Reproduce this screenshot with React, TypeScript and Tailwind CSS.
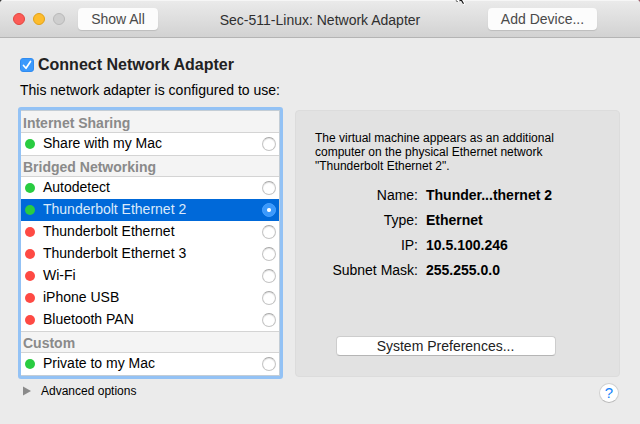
import { useState } from "react";

type Adapter = { name: string; up: boolean };
type Group = { title: string; adapters: Adapter[] };

const groups: Group[] = [
  { title: "Internet Sharing", adapters: [{ name: "Share with my Mac", up: true }] },
  {
    title: "Bridged Networking",
    adapters: [
      { name: "Autodetect", up: true },
      { name: "Thunderbolt Ethernet 2", up: true },
      { name: "Thunderbolt Ethernet", up: false },
      { name: "Thunderbolt Ethernet 3", up: false },
      { name: "Wi-Fi", up: false },
      { name: "iPhone USB", up: false },
      { name: "Bluetooth PAN", up: false },
    ],
  },
  { title: "Custom", adapters: [{ name: "Private to my Mac", up: true }] },
];

const details = [
  ["Name:", "Thunder...thernet 2"],
  ["Type:", "Ethernet"],
  ["IP:", "10.5.100.246"],
  ["Subnet Mask:", "255.255.0.0"],
];

function TitleBar() {
  return (
    <header className="grid h-[38px] grid-cols-[1fr_auto_1fr] items-center border-b border-[#b4b4b4] bg-linear-to-b from-[#ebebeb] to-[#d2d2d2] shadow-[inset_0_1px_0_#f6f6f6]">
      <div className="flex items-center gap-2 pl-[13px]">
        <button aria-label="Close" className="size-3 rounded-full border border-[#e2463f] bg-[#fc5b57]" />
        <button aria-label="Minimize" className="size-3 rounded-full border border-[#e1a116] bg-[#fdbc2d]" />
        <button aria-label="Zoom" className="size-3 rounded-full border border-[#b9b9b9] bg-[#cecece]" />
        <button className="ml-[5px] h-[22px] w-20 rounded bg-[#fcfcfc] text-[14px] leading-5 text-[#4a4a4a] shadow-[0_1px_1px_#bdbdbd]">
          Show All
        </button>
      </div>
      <h1 className="pt-[2px] text-[14px] leading-5 text-[#2f2f2f]">Sec-511-Linux: Network Adapter</h1>
      <div className="flex justify-end pr-[43px]">
        <button className="h-[22px] w-[109px] rounded bg-[#fcfcfc] text-[14px] leading-5 text-[#4a4a4a] shadow-[0_1px_1px_#bdbdbd]">
          Add Device...
        </button>
      </div>
    </header>
  );
}

function AdapterRow({ adapter, selected, onSelect }: { adapter: Adapter; selected: boolean; onSelect: () => void }) {
  return (
    <label
      className={
        "flex h-[22px] items-center gap-2 pl-1 pr-[3px] text-[14px] leading-5 " +
        (selected ? "bg-[#0069d9] text-[#dbe9fb]" : "bg-white text-black")
      }
    >
      <span className={"size-[10px] shrink-0 rounded-full " + (adapter.up ? "bg-[#29cc41]" : "bg-[#fe4a44]")} />
      <span className="grow pb-[2px]">{adapter.name}</span>
      <input
        type="radio"
        name="adapter"
        checked={selected}
        onChange={onSelect}
        className="size-[14px] shrink-0 appearance-none rounded-full border border-[#c4c4c4] border-t-[#a8a8a8] bg-white shadow-[inset_0_1px_1px_#e2e2e2] checked:border-[#3b99fc] checked:bg-[radial-gradient(circle,#ffffff_0_1.5px,#3b99fc_2.5px)] checked:shadow-none"
      />
    </label>
  );
}

export default function App() {
  const [selected, setSelected] = useState("Thunderbolt Ethernet 2");

  return (
    <div className="bg-linear-to-r from-[#3a3a3a] to-[#a0606c]">
      <div className="relative flex min-h-screen flex-col overflow-hidden rounded-t bg-[#ebebeb] font-['Liberation_Sans',Arial,sans-serif] text-black">
        <TitleBar />
        <svg className="absolute left-[455px] top-0 h-[5px] w-3" viewBox="0 0 12 5" aria-hidden="true">
          <path d="M1 0h7l2.500 4-2 1L6 1.500 3 2z" fill="#fff" />
          <path d="M4.500 0H7L9 3.500 8 4 6 .8 4.500 1.500z" fill="#111" />
          <path d="M1 0 2 2l1-1" fill="none" stroke="#777" />
        </svg>
        <main className="flex grow flex-col px-[18px] pt-[17px]">
          <label className="flex h-5 items-center gap-1 pl-[2px] text-[16px] font-bold leading-5 text-[#222]">
            <span className="grid size-[14px] place-items-center">
              <input
                type="checkbox"
                defaultChecked
                className="col-start-1 row-start-1 size-[14px] appearance-none rounded-[3px] border border-[#a8a8a8] bg-white checked:border-[#318cf0] checked:bg-[#3b99fc]"
              />
              <svg className="pointer-events-none col-start-1 row-start-1 size-[14px]" viewBox="0 0 14 14" aria-hidden="true">
                <path d="M3.500 7.500 6 10.300 10.500 3.500" fill="none" stroke="#fff" strokeWidth="1.700" strokeLinecap="round" strokeLinejoin="round" />
              </svg>
            </span>
            Connect Network Adapter
          </label>
          <p className="mt-[5px] pl-[2px] text-[14px] leading-5">This network adapter is configured to use:</p>

          <div className="mr-[2px] mt-[7px] grid grid-cols-[265fr_325fr] gap-3">
            <div className="rounded-[3px] border-3 border-[#93c2f5]">
              <div className="border-y border-r border-[#c3cdd6]">
                {groups.map((group, index) => (
                  <fieldset key={group.title}>
                    <legend
                      className={
                        "h-[22px] w-full border-b border-[#d4d4d4] bg-[#f4f4f4] pl-[2px] text-[14px] font-bold leading-5 text-[#8a8a8a]" +
                        (index > 0 ? " border-t pt-px" : " pt-[2px]")
                      }
                    >
                      {group.title}
                    </legend>
                    {group.adapters.map((adapter) => (
                      <AdapterRow
                        key={adapter.name}
                        adapter={adapter}
                        selected={adapter.name === selected}
                        onSelect={() => setSelected(adapter.name)}
                      />
                    ))}
                  </fieldset>
                ))}
              </div>
            </div>

            <section className="mb-[2px] mt-[3px] flex flex-col rounded border border-[#dcdcdc] bg-[#e2e2e2] px-[19px] pb-5 pt-5">
              <p className="text-[12px] leading-[14px]">
                The virtual machine appears as an additional computer on the physical Ethernet network "Thunderbolt Ethernet 2".
              </p>
              <dl className="mt-[10px] grid grid-cols-[103px_1fr] gap-x-2 text-[14px] leading-[25px]">
                {details.map(([term, value]) => (
                  <div key={term} className="contents">
                    <dt className="text-right">{term}</dt>
                    <dd className="font-bold">{value}</dd>
                  </div>
                ))}
              </dl>
              <div className="mt-auto flex justify-center pr-6">
                <button className="h-5 w-[220px] rounded border border-[#cdcdcd] border-b-[#b5b5b5] bg-white text-[14px] leading-[18px] text-[#222]">
                  System Preferences...
                </button>
              </div>
            </section>
          </div>

          <div className="flex items-start justify-between pl-[5px] pr-[3px] pt-1">
            <button className="flex h-4 items-center gap-[10px] text-[12px] leading-4">
              <svg className="h-[10px] w-2" viewBox="0 0 8 10" aria-hidden="true">
                <path d="M0 .5 8 5 0 9.500z" fill="#8a8a8a" />
              </svg>
              Advanced options
            </button>
            <button
              aria-label="Help"
              className="size-5 rounded-full border border-[#d0d0d0] border-b-[#b8b8b8] bg-white text-[15px] leading-[18px] text-[#1383fb]"
            >
              ?
            </button>
          </div>
        </main>
      </div>
    </div>
  );
}
